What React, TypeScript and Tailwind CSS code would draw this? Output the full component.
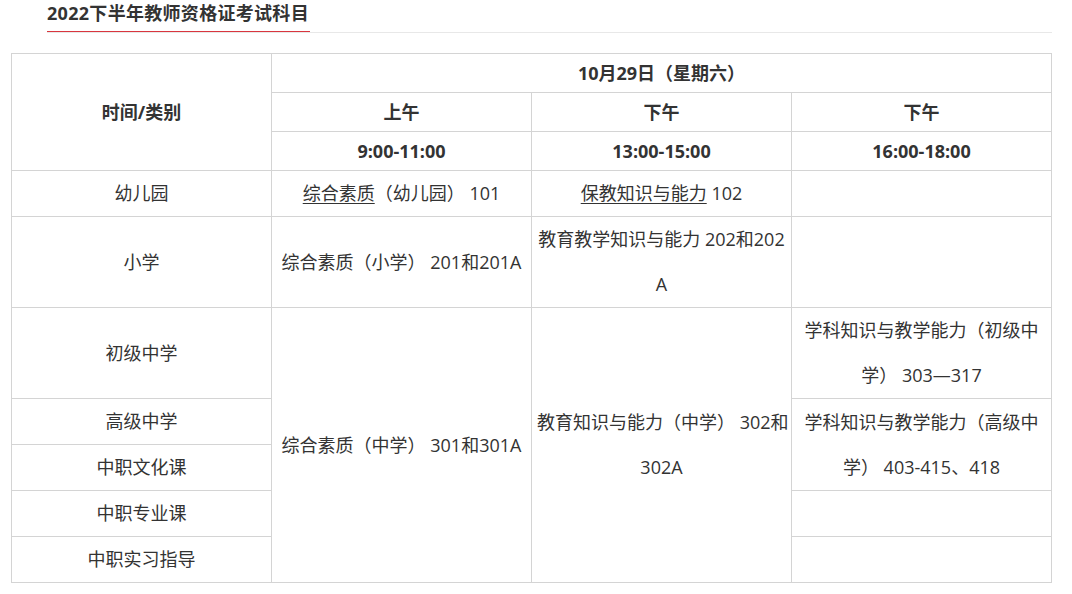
import React from "react";

const F = { fontFamily: '"Open Sans", "Noto Sans CJK SC", sans-serif' };

const hd = "border border-[#d4d4d4] p-0 px-[5px] text-center align-middle font-bold leading-[38px]";
const bd = "border border-[#d4d4d4] p-0 px-[5px] text-center align-middle leading-[45px] whitespace-nowrap";

export default function App() {
  return (
    <div className="w-[1072px] h-[594px] overflow-hidden bg-white text-[#333]" style={F}>
      <div className="ml-[47px] w-[1005px] border-b border-[#e8e8e8]">
        <span className="inline-block align-top border-b border-[#d9363e] pb-[5px] pr-[1px] text-[18px] font-bold leading-[26px] tracking-[0.3px] text-[#333]">
          2022下半年教师资格证考试科目
        </span>
      </div>
      <table className="ml-[11px] mt-[20px] w-[1041px] table-fixed border-collapse text-[18px]">
        <colgroup>
          <col className="w-[260px]" />
          <col className="w-[260px]" />
          <col className="w-[260px]" />
          <col className="w-[260px]" />
        </colgroup>
        <tbody>
          <tr>
            <td rowSpan={3} className={hd}>时间/类别</td>
            <td colSpan={3} className={hd}>10月29日（星期六）</td>
          </tr>
          <tr>
            <td className={hd}>上午</td>
            <td className={hd}>下午</td>
            <td className={hd}>下午</td>
          </tr>
          <tr>
            <td className={hd}>9:00-11:00</td>
            <td className={hd}>13:00-15:00</td>
            <td className={hd}>16:00-18:00</td>
          </tr>
          <tr>
            <td className={bd}>幼儿园</td>
            <td className={bd}>
              <span className="underline underline-offset-[3px]">综合素质</span>（幼儿园） 101
            </td>
            <td className={bd}>
              <span className="underline underline-offset-[3px]">保教知识与能力</span> 102
            </td>
            <td className={bd}></td>
          </tr>
          <tr>
            <td className={bd}>小学</td>
            <td className={bd}>综合素质（小学） 201和201A</td>
            <td className={bd}>
              教育教学知识与能力 202和202
              <br />A
            </td>
            <td className={bd}></td>
          </tr>
          <tr>
            <td className={bd}>初级中学</td>
            <td rowSpan={5} className={bd}>综合素质（中学） 301和301A</td>
            <td rowSpan={5} className={bd}>
              教育知识与能力（中学） 302和
              <br />302A
            </td>
            <td className={bd}>
              学科知识与教学能力（初级中
              <br />学） 303—317
            </td>
          </tr>
          <tr>
            <td className={bd}>高级中学</td>
            <td rowSpan={2} className={bd}>
              学科知识与教学能力（高级中
              <br />学） 403-415、418
            </td>
          </tr>
          <tr>
            <td className={bd}>中职文化课</td>
          </tr>
          <tr>
            <td className={bd}>中职专业课</td>
            <td className={bd}></td>
          </tr>
          <tr>
            <td className={bd}>中职实习指导</td>
            <td className={bd}></td>
          </tr>
        </tbody>
      </table>
    </div>
  );
}
